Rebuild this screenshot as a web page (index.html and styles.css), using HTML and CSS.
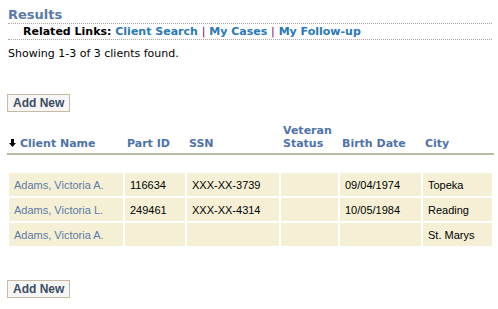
FILE: index.html
```html
<!DOCTYPE html>
<html lang="en">
  <head>
    <meta charset="UTF-8" />
    <meta name="viewport" content="width=device-width, initial-scale=1.0" />
    <title>Results</title>
    <link rel="stylesheet" href="styles.css">
  </head>
  <body>
    <main>
      <h2 class="title">Results</h2>
      <div class="related">
        <strong>Related Links:</strong>
        <a href="#">Client Search</a> <span class="sep">|</span>
        <a href="#">My Cases</a> <span class="sep">|</span>
        <a href="#">My Follow-up</a>
      </div>
      <p class="count">Showing 1-3 of 3 clients found.</p>

      <div class="actions">
        <button type="button" class="btn">Add New</button>
      </div>

      <table class="clients">
        <colgroup>
          <col class="c-name">
          <col class="c-part">
          <col class="c-ssn">
          <col class="c-vet">
          <col class="c-birth">
          <col class="c-city">
        </colgroup>
        <thead>
          <tr>
            <th><svg class="sort" width="7" height="8" viewBox="0 0 7 8" aria-hidden="true"><path d="M2 0h3v4h2L3.5 8 0 4h2z" fill="#000"/></svg><a href="#">Client Name</a></th>
            <th><a href="#">Part ID</a></th>
            <th><a href="#">SSN</a></th>
            <th><a href="#">Veteran<br>Status</a></th>
            <th><a href="#">Birth Date</a></th>
            <th><a href="#">City</a></th>
          </tr>
        </thead>
        <tbody>
          <tr class="spacer"><td colspan="6"></td></tr>
          <tr>
            <td><a href="#">Adams, Victoria A.</a></td>
            <td>116634</td>
            <td>XXX-XX-3739</td>
            <td></td>
            <td>09/04/1974</td>
            <td>Topeka</td>
          </tr>
          <tr>
            <td><a href="#">Adams, Victoria L.</a></td>
            <td>249461</td>
            <td>XXX-XX-4314</td>
            <td></td>
            <td>10/05/1984</td>
            <td>Reading</td>
          </tr>
          <tr>
            <td><a href="#">Adams, Victoria A.</a></td>
            <td></td>
            <td></td>
            <td></td>
            <td></td>
            <td>St. Marys</td>
          </tr>
        </tbody>
      </table>

      <div class="actions actions-bottom">
        <button type="button" class="btn">Add New</button>
      </div>
    </main>
  </body>
</html>
```

FILE: styles.css
```css
body {
  margin: 0;
  padding: 0 6px 0 8px;
  font-family: "DejaVu Sans", Verdana, sans-serif;
  font-size: 11px;
  color: #000;
  background: #fff;
}

a {
  text-decoration: none;
}

.title {
  margin: 0;
  padding-top: 6px;
  font-size: 13px;
  line-height: 17px;
  color: #5a7aaa;
  border-bottom: 1px dotted #a8a8a0;
}

.related {
  padding-left: 15px;
  line-height: 15px;
  font-weight: bold;
  border-bottom: 1px dotted #a8a8a0;
}

.related a {
  color: #2a78b8;
}

.related .sep {
  color: #800080;
  font-weight: normal;
}

.count {
  margin: 7px 0 0;
  line-height: 14px;
}

.actions {
  margin-top: 33px;
}

.actions-bottom {
  margin-top: 32px;
}

.btn {
  margin-left: -1px;
  padding: 0 5px;
  height: 18px;
  font-family: "Liberation Sans", Arial, sans-serif;
  font-size: 12px;
  font-weight: bold;
  color: #3d4d63;
  background: #f6f6f6;
  border: 1px solid #c9b9a3;
  border-radius: 0;
}

.clients {
  margin: 12px 0 0 -1px;
  width: 485px;
  border-collapse: collapse;
  table-layout: fixed;
}

.c-name { width: 116px; }
.c-part { width: 62px; }
.c-ssn { width: 94px; }
.c-vet { width: 59px; }
.c-birth { width: 83px; }
.c-city { width: 71px; }

.clients th {
  padding: 0 3px 3px;
  text-align: left;
  vertical-align: bottom;
  font-size: 11px;
  line-height: 13px;
  white-space: nowrap;
  border-bottom: 2px solid #bbbaa5;
}

.clients th a {
  color: #4f73a8;
}

.sort {
  margin-right: 4px;
  vertical-align: 0;
}

.clients th:first-child {
  padding-left: 1px;
}

.clients td {
  padding: 0 5px;
  height: 23px;
  font-family: "Liberation Sans", Arial, sans-serif;
  font-size: 11px;
  background: #f5f0d5;
  border: 2px solid #fff;
}

.clients td a {
  color: #5b7aa8;
}

.clients .spacer td {
  height: 16px;
  padding: 0;
  background: #fff;
}
```
